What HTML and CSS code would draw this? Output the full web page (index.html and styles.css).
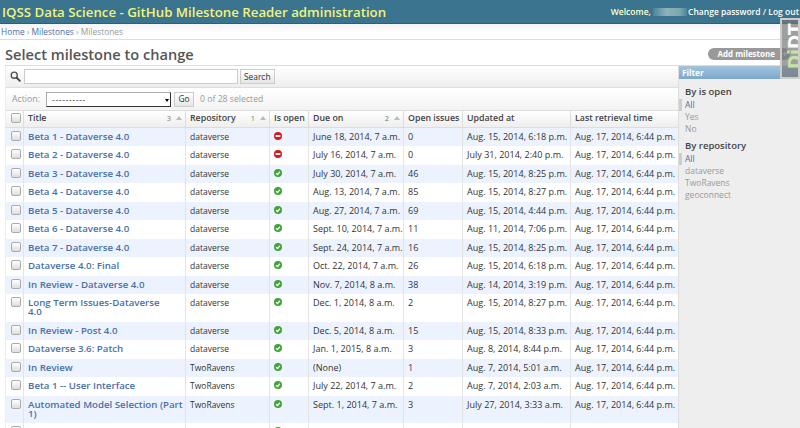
FILE: index.html
```html
<!DOCTYPE html>
<html lang="en">
<head>
    <meta charset="UTF-8">
    <title>Select milestone to change</title>
    <link rel="stylesheet" href="styles.css">
</head>
<body>
    <div id="header">
        <h1 id="branding">IQSS Data Science - GitHub Milestone Reader administration</h1>
        <div id="user-tools">Welcome, <span class="blurred-name"></span> <a href="#">Change password</a> / <a href="#">Log out</a></div>
    </div>
    <div class="breadcrumbs"><a href="#">Home</a> › <a href="#">Milestones</a> › Milestones</div>
    <div id="content">
        <div class="title-row">
            <h2>Select milestone to change</h2>
            <a href="#" class="addlink">Add milestone</a>
        </div>
        <div id="changelist">
            <div class="results-col">
                <div id="toolbar">
                    <svg class="search-icon" width="11" height="11" viewBox="0 0 13 13"><circle cx="5" cy="5" r="3.6" fill="#f4f4f4" stroke="#555" stroke-width="1.6"/><path d="M8 8l3.6 3.6" stroke="#444" stroke-width="2.2" stroke-linecap="round"/></svg>
                    <input type="text" class="search-box">
                    <button class="btn">Search</button>
                </div>
                <div class="actions">
                    <label>Action:</label>
                    <div class="fake-select"><span>----------</span><i class="select-arrow"></i></div>
                    <button class="btn btn-go">Go</button>
                    <span class="action-counter">0 of 28 selected</span>
                </div>
                <table id="result_list">
                    <thead>
                        <tr>
                            <th class="c-check"><input type="checkbox"></th>
                            <th class="c-title">Title<span class="sort">3 <i></i></span></th>
                            <th class="c-repo">Repository<span class="sort">1 <i></i></span></th>
                            <th class="c-open">Is open</th>
                            <th class="c-due">Due on<span class="sort">2 <i></i></span></th>
                            <th class="c-issues">Open issues</th>
                            <th class="c-updated">Updated at</th>
                            <th class="c-retrieved">Last retrieval time</th>
                        </tr>
                    </thead>
                    <tbody id="rows"></tbody>
                </table>
            </div>
            <div id="filter">
                <h3 class="filter-head">Filter</h3>
                <h4>By is open</h4>
                <ul>
                    <li class="selected"><a href="#">All</a></li>
                    <li>Yes</li>
                    <li>No</li>
                </ul>
                <h4>By repository</h4>
                <ul>
                    <li class="selected"><a href="#">All</a></li>
                    <li>dataverse</li>
                    <li>TwoRavens</li>
                    <li>geoconnect</li>
                </ul>
            </div>
        </div>
    </div>
    <div id="djdt-handle"><span><b>Dj</b>DT</span></div>

    <script>
        const milestones = [
            ['Beta 1 - Dataverse 4.0', 'dataverse', 0, 'June 18, 2014, 7 a.m.', '0', 'Aug. 15, 2014, 6:18 p.m.'],
            ['Beta 2 - Dataverse 4.0', 'dataverse', 0, 'July 16, 2014, 7 a.m.', '0', 'July 31, 2014, 2:40 p.m.'],
            ['Beta 3 - Dataverse 4.0', 'dataverse', 1, 'July 30, 2014, 7 a.m.', '46', 'Aug. 15, 2014, 8:25 p.m.'],
            ['Beta 4 - Dataverse 4.0', 'dataverse', 1, 'Aug. 13, 2014, 7 a.m.', '85', 'Aug. 15, 2014, 8:27 p.m.'],
            ['Beta 5 - Dataverse 4.0', 'dataverse', 1, 'Aug. 27, 2014, 7 a.m.', '69', 'Aug. 15, 2014, 4:44 p.m.'],
            ['Beta 6 - Dataverse 4.0', 'dataverse', 1, 'Sept. 10, 2014, 7 a.m.', '11', 'Aug. 11, 2014, 7:06 p.m.'],
            ['Beta 7 - Dataverse 4.0', 'dataverse', 1, 'Sept. 24, 2014, 7 a.m.', '16', 'Aug. 15, 2014, 8:25 p.m.'],
            ['Dataverse 4.0: Final', 'dataverse', 1, 'Oct. 22, 2014, 7 a.m.', '26', 'Aug. 15, 2014, 6:18 p.m.'],
            ['In Review - Dataverse 4.0', 'dataverse', 1, 'Nov. 7, 2014, 8 a.m.', '38', 'Aug. 14, 2014, 3:19 p.m.'],
            ['Long Term Issues-Dataverse<br>4.0', 'dataverse', 1, 'Dec. 1, 2014, 8 a.m.', '2', 'Aug. 15, 2014, 8:27 p.m.'],
            ['In Review - Post 4.0', 'dataverse', 1, 'Dec. 5, 2014, 8 a.m.', '15', 'Aug. 15, 2014, 8:33 p.m.'],
            ['Dataverse 3.6: Patch', 'dataverse', 1, 'Jan. 1, 2015, 8 a.m.', '3', 'Aug. 8, 2014, 8:44 p.m.'],
            ['In Review', 'TwoRavens', 1, '(None)', '1', 'Aug. 7, 2014, 5:01 a.m.'],
            ['Beta 1 -- User Interface', 'TwoRavens', 1, 'July 22, 2014, 7 a.m.', '2', 'Aug. 7, 2014, 2:03 a.m.'],
            ['Automated Model Selection (Part<br>1)', 'TwoRavens', 1, 'Sept. 1, 2014, 7 a.m.', '3', 'July 27, 2014, 3:33 a.m.'],
            ['Automated Model Selection (Part<br>2)', 'TwoRavens', 1, 'Oct. 1, 2014, 7 a.m.', '3', 'July 8, 2014, 3:11 a.m.']
        ];

        const okIcon = '<svg width="8" height="8" viewBox="0 0 10 10"><circle cx="5" cy="5" r="5" fill="#3fa535"/><path d="M2.6 5.2l1.8 1.8 3-3.6" fill="none" stroke="#fff" stroke-width="1.7"/></svg>';
        const noIcon = '<svg width="8" height="8" viewBox="0 0 10 10"><circle cx="5" cy="5" r="5" fill="#d8161b"/><rect x="2" y="3.8" width="6" height="2.4" fill="#fff"/></svg>';

        const rows = document.getElementById('rows');
        milestones.forEach((m) => {
            const tr = document.createElement('tr');
            tr.innerHTML = '<td class="c-check"><input type="checkbox"></td>' +
                '<th class="row-title"><a href="#">' + m[0] + '</a></th>' +
                '<td class="repo-cell">' + m[1] + '</td>' +
                '<td class="icon-cell">' + (m[2] ? okIcon : noIcon) + '</td>' +
                '<td>' + m[3] + '</td>' +
                '<td>' + m[4] + '</td>' +
                '<td>' + m[5] + '</td>' +
                '<td>Aug. 17, 2014, 6:44 p.m.</td>';
            rows.appendChild(tr);
        });
    </script>
</body>
</html>
```

FILE: styles.css
```css
html {
    overflow: hidden;
}

body {
    margin: 0;
    padding: 0;
    font-family: "Open Sans", sans-serif;
    font-size: 9px;
    color: #333;
    background-color: #fff;
}

a {
    color: #4a70a6;
    text-decoration: none;
}

#header {
    height: 23px;
    background-color: #3a748e;
    border-bottom: 1px solid #2d6078;
    display: flex;
    justify-content: space-between;
    align-items: center;
    padding: 0 1px 0 2px;
}

#branding {
    margin: 0;
    font-size: 13.25px;
    font-weight: 600;
    color: #f4f379;
}

#user-tools {
    font-size: 8.5px;
    font-weight: 600;
    color: #ffc;
    display: flex;
    align-items: center;
    white-space: pre;
}

#user-tools a {
    color: #fff;
}

.blurred-name {
    display: inline-block;
    width: 34px;
    height: 8px;
    margin-right: 1px;
    background: linear-gradient(90deg, #4b8499, #8fb3b8 40%, #7ca6ad 80%, #4b8499);
}

.breadcrumbs {
    height: 15px;
    line-height: 15px;
    padding-left: 1px;
    font-size: 8.4px;
    color: #999;
    background: linear-gradient(#f4f4f4, #fff 60%);
    border-bottom: 1px solid #ddd;
}

#content {
    padding: 0 0 0 5px;
}

.title-row {
    height: 25px;
    display: flex;
    justify-content: space-between;
    align-items: center;
}

.title-row h2 {
    margin: 2px 0 0;
    font-size: 14.6px;
    font-weight: 600;
    color: #555;
}

.addlink {
    position: relative;
    background-color: #999;
    color: #fff;
    font-size: 8px;
    font-weight: 700;
    height: 12px;
    line-height: 12px;
    border-radius: 6px;
    padding: 0 15px 0 9px;
    margin: 3px 10px 0 0;
}

.addlink::after {
    content: "+";
    position: absolute;
    right: 3px;
    top: 0;
}

#changelist {
    display: flex;
    border-top: 1px solid #ddd;
}

.results-col {
    width: 673px;
}

#toolbar {
    height: 22px;
    display: flex;
    align-items: center;
    padding-left: 4px;
    box-sizing: border-box;
    background: linear-gradient(#fff, #eee);
    border-bottom: 1px solid #ddd;
    border-left: 1px solid #eee;
}

.search-icon {
    margin-right: 3px;
}

.search-box {
    width: 214px;
    height: 15px;
    box-sizing: border-box;
    margin: 0 2px 0 0;
    border: 1px solid #ccc;
    background: #fff;
}

.btn {
    height: 15px;
    padding: 0 3px;
    font-family: inherit;
    font-size: 8.4px;
    line-height: 12px;
    color: #333;
    background: linear-gradient(#fff, #e6e6e6);
    border: 1px solid #ccc;
}

.btn-go {
    width: 20px;
    padding: 0;
}

.actions {
    height: 23px;
    display: flex;
    align-items: center;
    padding-left: 6px;
    box-sizing: border-box;
    font-size: 8.7px;
    color: #999;
    background: linear-gradient(#fff, #f3f3f3);
    border-bottom: 1px solid #ddd;
    border-left: 1px solid #eee;
}

.actions label {
    width: 34px;
}

.fake-select {
    position: relative;
    width: 125px;
    height: 15px;
    margin-right: 3px;
    box-sizing: border-box;
    padding-left: 5px;
    line-height: 14px;
    letter-spacing: 0.6px;
    color: #444;
    background: #fff;
    border: 1px solid #aaa;
    border-right-color: #333;
    border-bottom-color: #333;
}

.select-arrow {
    position: absolute;
    right: 1px;
    top: 6px;
    border-left: 2px solid transparent;
    border-right: 2px solid transparent;
    border-top: 3px solid #000;
}

.action-counter {
    margin-left: 6px;
}

#result_list {
    width: 673px;
    border-collapse: collapse;
    table-layout: fixed;
}

#result_list th,
#result_list td {
    padding: 4px 3px 5.5px 4px;
    line-height: 9px;
    font-size: 9.05px;
    font-weight: normal;
    text-align: left;
    vertical-align: top;
    box-sizing: border-box;
    white-space: nowrap;
}

#result_list thead th {
    height: 16px;
    padding-top: 2.5px;
    padding-bottom: 2.5px;
    font-size: 8.8px;
    font-weight: 600;
    color: #444;
    background: linear-gradient(#fff, #eee);
    border-left: 1px solid #ddd;
    border-bottom: 1px solid #ddd;
}

#result_list tbody tr {
    background-color: #fff;
}

#result_list tbody tr:nth-child(odd) {
    background-color: #edf3fe;
}

#result_list tbody td,
#result_list tbody th {
    border-left: 1px solid #e4e4e4;
}

#result_list .c-check {
    width: 18px;
    padding: 0;
    text-align: center;
    border-left: 1px solid #eee;
    vertical-align: top;
}

.c-check input {
    appearance: none;
    display: block;
    width: 10px;
    height: 10px;
    margin: 3px 0 0 5px;
    box-sizing: border-box;
    border: 1px solid #aaa;
    border-radius: 2px;
    background: linear-gradient(#fff, #ddd);
}

#result_list thead .c-check input {
    margin-top: 2px;
}

.c-title { width: 162px; }
.c-repo { width: 84px; }
.c-open { width: 39px; }
.c-due { width: 95px; }
.c-issues { width: 59px; }
.c-updated { width: 108px; }
.c-retrieved { width: 108px; }

#result_list .row-title {
    font-weight: 600;
    font-size: 9.7px;
}

#result_list .repo-cell {
    font-size: 8.5px;
}

#result_list .icon-cell {
    padding-bottom: 0;
}

#result_list .icon-cell svg {
    display: block;
}

.sort {
    float: right;
    font-size: 7.5px;
    font-weight: normal;
    color: #777;
}

.sort i {
    display: inline-block;
    margin-left: 3px;
    border-left: 3px solid transparent;
    border-right: 3px solid transparent;
    border-bottom: 4px solid #bbb;
    vertical-align: 1px;
}

#filter {
    width: 122px;
    min-height: 362px;
    background-color: #eee;
    border-left: 1px solid #ddd;
    box-sizing: border-box;
}

.filter-head {
    margin: 0 0 6px;
    height: 13px;
    line-height: 13px;
    padding-left: 3px;
    font-size: 8.2px;
    font-weight: 700;
    color: #fff;
    background: linear-gradient(#a3c4dd, #7ca8cb);
}

#filter h4 {
    margin: 3px 0 0 6px;
    font-size: 9.5px;
    line-height: 14px;
    font-weight: 600;
    color: #444;
}

#filter ul {
    list-style: none;
    margin: 0 0 4px;
    padding: 0 0 0 6px;
    font-size: 8.5px;
    color: #999;
}

#filter li {
    position: relative;
    line-height: 12px;
}

#filter li.selected::before {
    content: "";
    position: absolute;
    left: -6px;
    top: 0;
    width: 3px;
    height: 12px;
    background-color: #ccc;
}

#djdt-handle {
    position: absolute;
    left: 780px;
    top: 18px;
    width: 20px;
    height: 61px;
    box-sizing: border-box;
    border: 2px solid #ccc;
    background-color: rgba(120, 120, 120, 0.7);
    overflow: hidden;
}

#djdt-handle span {
    position: absolute;
    left: 22px;
    bottom: 8px;
    transform-origin: 0 100%;
    transform: rotate(-90deg);
    font-family: "DejaVu Sans", sans-serif;
    font-size: 17px;
    font-weight: bold;
    line-height: 17px;
    color: #fff;
    white-space: nowrap;
}

#djdt-handle b {
    color: #c6e3a5;
}
```
